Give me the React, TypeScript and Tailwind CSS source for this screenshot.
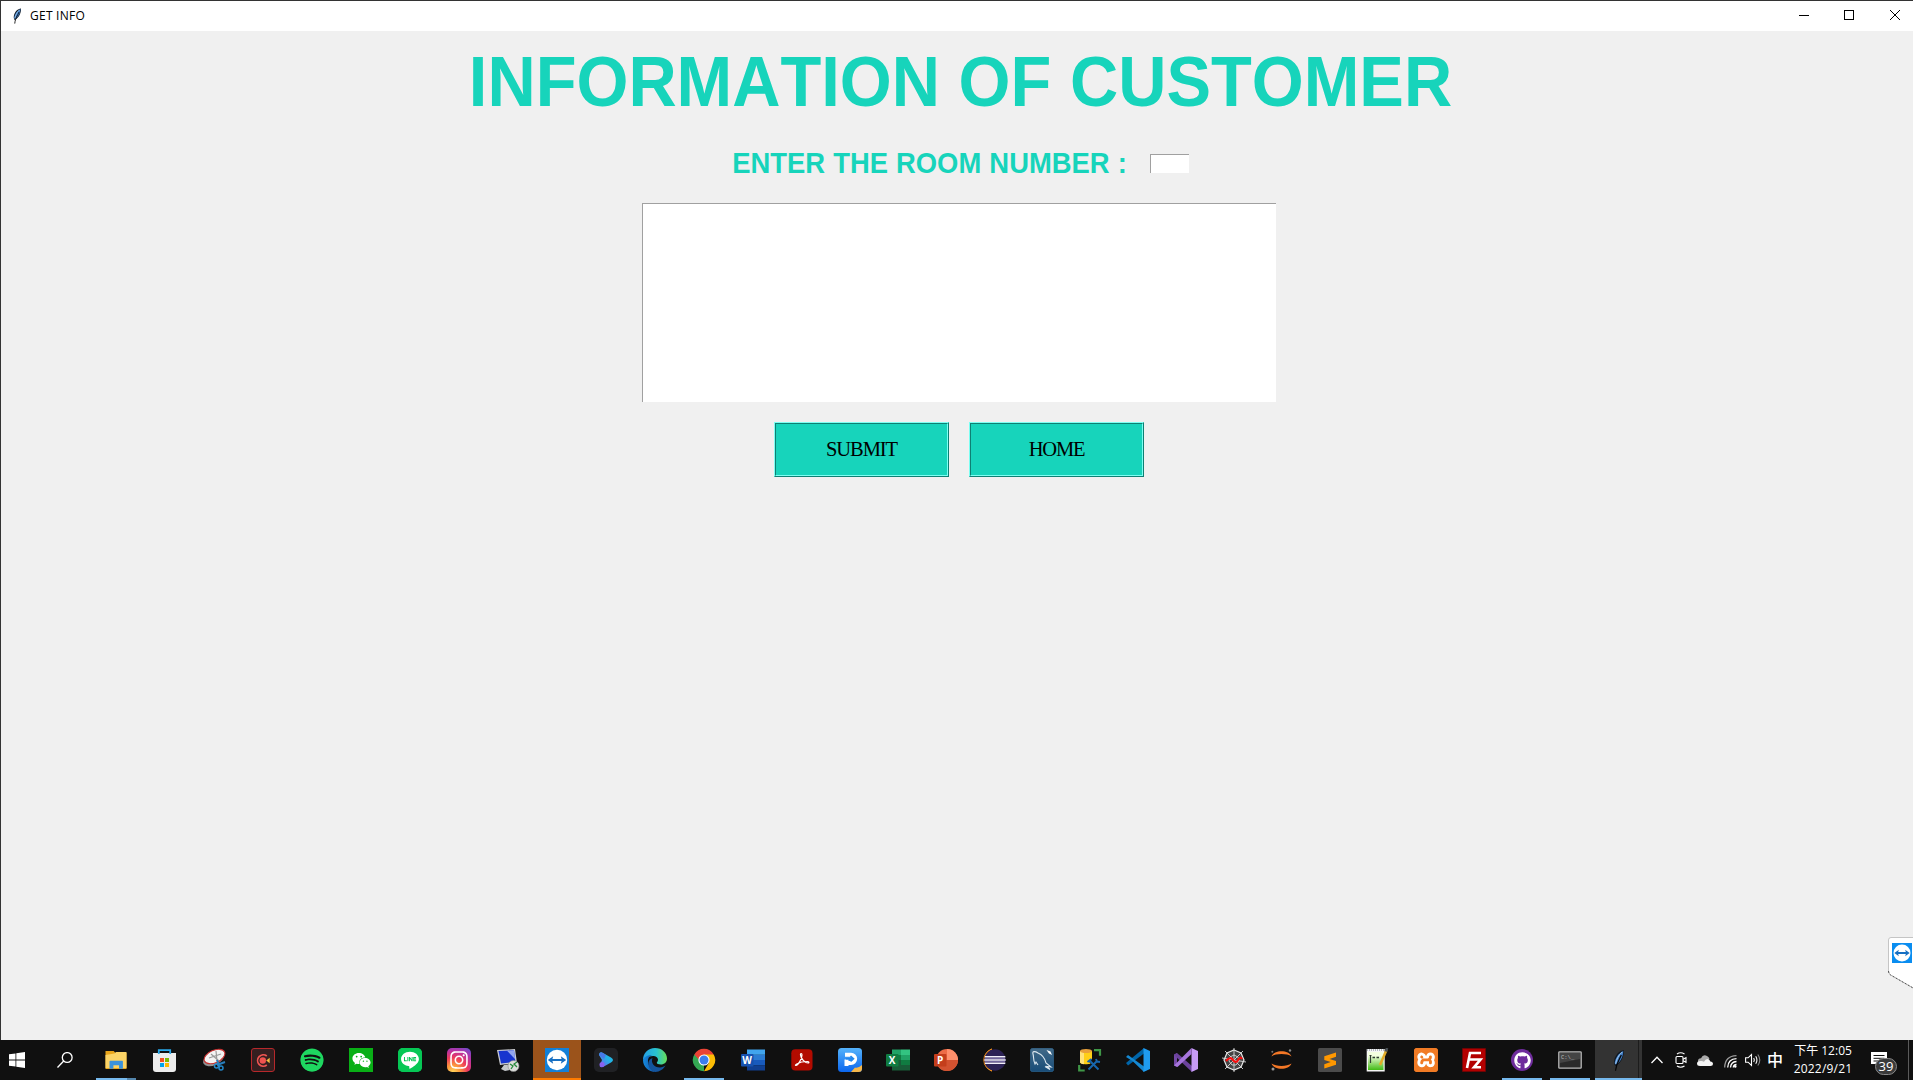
import React from "react";
import { FaSpotify, FaWeixin, FaLine, FaGithub, FaInstagram } from "react-icons/fa";
import { SiXampp } from "react-icons/si";

type P = { children: React.ReactNode };
const Ico = ({ children }: P) => (
  <svg viewBox="0 0 24 24" className="block size-6 shrink-0">{children}</svg>
);

const Feather = ({ className }: { className: string }) => (
  <svg viewBox="0 0 12 20" className={className}>
    <path d="M11 .6C7 .9 3.400 4.500 2.200 9 1.600 11.500 2 13.500 3 15c3-1.500 5.500-4 6.800-7.500C10.700 5 11.200 2.500 11 .6z" fill="#111820" />
    <path d="M10.400 1.200C6.500 3 2.900 7.500 2.500 12.500l1 1.500C7.500 11.500 10.200 7 10.400 1.200z" fill="#3f7fca" />
    <path d="M9.400 2.200C6 5 4 9 3.400 13" stroke="#b8d7f0" strokeWidth=".8" fill="none" />
    <path d="M8.600 5C6.500 10 4 12 3.200 19.500" stroke="#070707" strokeWidth="1.100" fill="none" />
  </svg>
);

const TeamViewer = ({ className, color }: { className: string; color: string }) => (
  <svg viewBox="0 0 24 24" className={className}>
    <rect width="24" height="24" fill={color} />
    <circle cx="12" cy="12" r="10.200" fill="#fff" />
    <path d="M2.800 12l5.400-3.800-.8 2.700h9.200l-.8-2.700 5.400 3.800-5.400 3.800.8-2.700H7.400l.8 2.700z" fill="#176fc2" />
  </svg>
);

const Letter = ({ c, dark }: { c: string; dark: string }) => (
  <>
    <rect x="0" y="6" width="12.500" height="12.500" rx="1" fill={dark} />
    <text x="6.200" y="15.900" textAnchor="middle" fontSize="10" fontWeight="700" fontFamily="Open Sans, sans-serif" fill="#fff">{c}</text>
  </>
);

const Explorer = () => (
  <Ico>
    <path d="M1.500 3h8.200l1.800 2H22.500v16H1.500z" fill="#e9a51a" />
    <path d="M1.500 7l9-1.500 1.500-1.500h10.500V20H1.500z" fill="#fbd366" />
    <path d="M5.500 20.800V13.500q0-.7.7-.7h12q.7 0 .7.700v7.300h-3.900v-3.500h-5.600v3.500z" fill="#3a92dc" />
  </Ico>
);
const Store = () => (
  <Ico>
    <path d="M0 5h23v16q0 3-3 3H3q-3 0-3-3z" fill="#ececec" />
    <path d="M5.800 6V2.200h11.400V6" stroke="#28a8ea" strokeWidth="1.800" fill="none" />
    <path d="M7 10h4v4H7z" fill="#f25022" /><path d="M12 10h4v4h-4z" fill="#7fba00" />
    <path d="M7 15h4v4H7z" fill="#00a4ef" /><path d="M12 15h4v4h-4z" fill="#ffb900" />
  </Ico>
);
const Snip = () => (
  <Ico>
    <ellipse cx="11.500" cy="11" rx="11" ry="6.200" transform="rotate(-24 11.500 11)" fill="#8f9294" />
    <ellipse cx="12.500" cy="8.500" rx="11" ry="6.200" transform="rotate(-24 12.500 8.500)" fill="#f3f3f3" stroke="#c63030" strokeWidth="1.100" />
    <path d="M7 10l12-4M14 3l1 10M9 6l8 7" stroke="#9a9a9a" strokeWidth="1.200" />
    <path d="M15 17l8-3M17.500 19L15 12" stroke="#287ebd" strokeWidth="2" />
    <circle cx="14.500" cy="18" r="2" fill="none" stroke="#2387c9" strokeWidth="1.500" />
    <circle cx="19" cy="20" r="2" fill="none" stroke="#2387c9" strokeWidth="1.500" />
  </Ico>
);
const Recorder = () => (
  <Ico>
    <rect x=".5" y=".5" width="23" height="23" rx="2.500" fill="#351f20" stroke="#b7282b" />
    <path d="M15.800 8a5.700 5.700 0 1 0 0 9" fill="none" stroke="#ef5552" strokeWidth="1.700" />
    <circle cx="11.800" cy="12.500" r="3.200" fill="#f05350" />
    <path d="M15.200 12.500l3.500-2.800v5.600z" fill="#f6bd3f" />
  </Ico>
);
const Spotify = () => (
  <div className="flex size-6 items-center justify-center"><FaSpotify size={24} className="rounded-full bg-[#101010] text-[#1ed760]" /></div>
);
const WeChat = () => (
  <div className="flex size-6 items-center justify-center bg-[#09af16]"><FaWeixin size={19} color="#fff" /></div>
);
const Line = () => (
  <div className="flex size-6 items-center justify-center overflow-hidden rounded-[5px] bg-[#06c755]">
    <div className="flex size-[22px] items-center justify-center rounded-[6px] bg-white"><FaLine size={28} className="shrink-0 text-[#06c755]" /></div>
  </div>
);
const Insta = () => (
  <div className="flex size-6 items-center justify-center rounded-[5px] bg-[radial-gradient(circle_at_25%_100%,#ffd65c_0%,#fc9c3c_22%,#ee3a5b_48%,#b833a5_72%,#5853d8_100%)]">
    <FaInstagram size={20} color="#fff" />
  </div>
);
const Remote = () => (
  <Ico>
    <path d="M8 17l7-1 3 5-9 2-4-2z" fill="#c4c7ca" />
    <path d="M1 2l18-1 2 14-17 2z" fill="#c9cbd0" />
    <path d="M2.500 3l15.500-.7 1.400 11.700L5 15.500z" fill="#1735cf" />
    <path d="M11 2.700l7-.4 1.200 9z" fill="#91a6f0" />
    <circle cx="17.500" cy="18" r="5.500" fill="#dcdedb" stroke="#888" strokeWidth=".6" />
    <path d="M14 16l3 2-2 3M21 14l-3 2 3 3" fill="none" stroke="#278a3b" strokeWidth="1.300" />
  </Ico>
);
const Player = () => (
  <Ico>
    <defs><linearGradient id="pl" x1="0" x2="1" y1="1" y2="0"><stop stopColor="#7d55f2" /><stop offset=".6" stopColor="#20b4e6" /><stop offset="1" stopColor="#25b5dc" /></linearGradient></defs>
    <rect width="24" height="24" rx="5" fill="#202124" />
    <path d="M5 7q0-4 4-2l8 4.500q4 2.500 0 5L9 19q-4 1-3-2l2-5z" fill="url(#pl)" />
    <circle cx="8" cy="16.500" r="2.500" fill="#8861ef" /><path d="M5 7q1-4 4-2l3 2-2 4z" fill="#4878e8" />
  </Ico>
);
const Edge = () => (
  <Ico>
    <defs>
      <linearGradient id="e1" x1="0" x2="1"><stop stopColor="#249ee4" /><stop offset=".55" stopColor="#28c2d0" /><stop offset="1" stopColor="#67df56" /></linearGradient>
      <linearGradient id="e2" x1="0" x2="1"><stop stopColor="#168be0" /><stop offset="1" stopColor="#104f9f" /></linearGradient>
    </defs>
    <path d="M0 12C0 5 5 0 12 0s12 5 12 10.500c0 3.800-2.700 6-6.200 6-2.500 0-4-.8-4-1.700 0-.7 1.200-1.300 1.200-3C15 9.300 12.500 8 10 8 5 8 .2 11 0 12z" fill="url(#e1)" />
    <path d="M0 12c.5-3 5-5.300 9.500-4.700-4.700 1-5.200 5.400-3.900 9C7 20.300 11 24 12.500 24 5.500 24 0 18.800 0 12z" fill="url(#e2)" />
    <path d="M9.500 10c-2 4.500 1.500 9.500 7.500 9.500 2.300 0 4-.8 5.600-1.900C20.500 21.300 16.500 24 12.500 24 7.500 23 4.500 18 5.500 14c.5-2 2-3.300 4-4z" fill="#14549c" />
  </Ico>
);
const Chrome = () => (
  <Ico>
    <path d="M12 12L2.300 6.400A11.200 11.200 0 0 1 21.700 6.400z" fill="#ea4335" />
    <path d="M12 12L2.300 6.400A11.200 11.200 0 0 0 12 23.200z" fill="#34a853" />
    <path d="M2.300 6.400l4.900 8.400L12 12z" fill="#34a853" />
    <path d="M21.700 6.400A11.200 11.200 0 0 1 12 23.200l4.900-8.400L12 6.400z" fill="#fbbc05" />
    <path d="M2.300 6.400h19.400H12L7.200 12z" fill="#ea4335" />
    <circle cx="12" cy="12" r="5.600" fill="#fff" /><circle cx="12" cy="12" r="4.500" fill="#3b7ded" />
  </Ico>
);
const Word = () => (
  <Ico>
    <path d="M6 1.500h18v5.300H6z" fill="#41a5ee" /><path d="M6 6.800h18V12H6z" fill="#2b7cd3" />
    <path d="M6 12h18v5.200H6z" fill="#185abd" /><path d="M6 17.200h18v5.300H6z" fill="#103f91" />
    <Letter c="W" dark="#1752b0" />
  </Ico>
);
const Excel = () => (
  <Ico>
    <path d="M6 1.500h9v6H6z" fill="#21a366" /><path d="M15 1.500h9v6h-9z" fill="#33c481" />
    <path d="M6 7h9v5H6z" fill="#107c41" /><path d="M15 7h9v5h-9z" fill="#21a366" />
    <path d="M6 12h9v5H6z" fill="#185c37" /><path d="M15 12h9v5h-9z" fill="#107c41" />
    <path d="M6 17h18v5.500H6z" fill="#185c37" />
    <Letter c="X" dark="#107c41" />
  </Ico>
);
const Ppt = () => (
  <Ico>
    <circle cx="13" cy="12" r="11" fill="#ed6c47" /><path d="M13 1a11 11 0 0 1 11 11H13z" fill="#ff8f6b" />
    <path d="M24 12a11 11 0 0 1-22 0z" fill="#d35230" />
    <Letter c="P" dark="#c43e1c" />
  </Ico>
);
const Acrobat = () => (
  <Ico>
    <rect x="1.300" y="1.300" width="21.200" height="21.200" rx="4" fill="#b30b00" />
    <path d="M6 17.500c2-.2 6-6.500 6-10.500 0-2-1.700-2-1.500 0 .3 3.500 4.500 8 7.500 8 1.500 0 1-1.500-.5-1.500-3 0-8 .8-10.800 2.400-1.300.8-1.700 1.700-.7 1.600z" fill="none" stroke="#fff" strokeWidth="1.200" />
  </Ico>
);
const PdfTool = () => (
  <Ico>
    <defs><linearGradient id="pd" x2="0" y2="1"><stop stopColor="#55b3fb" /><stop offset="1" stopColor="#0b66ee" /></linearGradient></defs>
    <rect width="24" height="24" rx="3.500" fill="url(#pd)" />
    <path d="M8.500 18v-6.500M7 6.700h6a3.900 3.900 0 0 1 0 8.300H9" fill="none" stroke="#fff" strokeWidth="4" />
    <path d="M8 10.700h7m-2.500-2.700l3 2.700-3 2.700" fill="none" stroke="#2388ed" strokeWidth="1.600" />
    <path d="M24 17v3.500q0 3.500-3.500 3.500H13l4-4.500q3 1 7-2.500z" fill="#f7b84b" />
  </Ico>
);
const Eclipse = () => (
  <Ico>
    <path d="M10 1A11.500 11.500 0 0 0 10 23 12 12 0 0 1 10 1z" fill="#f7941e" stroke="#f7941e" />
    <circle cx="13" cy="12" r="10.700" fill="#2c2255" />
    <path d="M3 8.700h20.300M2.300 12h21.400M3 15.300h20.300" stroke="#f2effa" strokeWidth="1.400" />
    <path d="M3 10.300h20M3 13.700h20" stroke="#8377ae" strokeWidth="1" />
  </Ico>
);
const MySql = () => (
  <Ico>
    <defs><linearGradient id="my" x2="0" y2="1"><stop stopColor="#426a88" /><stop offset="1" stopColor="#174c78" /></linearGradient></defs>
    <rect x=".3" y=".3" width="23.400" height="23.400" rx="2.500" fill="url(#my)" stroke="#326b97" strokeWidth=".6" />
    <path d="M8 17L6 14l-1 2C3 12 4 9 3 6 2 3 5 3 8 5c5 2 7 6 8 10l5 4-4-.5 3 3-5-3" fill="none" stroke="#dbe7ef" strokeWidth="1.100" />
    <path d="M16.500 2l4 1.500L22 7l-3-1.500z" fill="#fff" />
  </Ico>
);
const DbTool = () => (
  <Ico>
    <path d="M16 2.200h6v5.500M1.200 17v5.500h5.500" fill="none" stroke="#3f9747" strokeWidth="2.200" />
    <path d="M2 3v11c0 3 12 3 12 0V3z" fill="#ffcf17" /><path d="M2 3v11c0 1 1.500 2 4 2.200V3z" fill="#ffe27a" />
    <ellipse cx="8" cy="3" rx="6" ry="2" fill="#e9a13b" />
    <path d="M10 22l10-10M12 12l9 10" stroke="#101010" strokeWidth="4" />
    <path d="M10.500 21.500l9-9M12 13l8.500 8.500M9.500 14l4-3M18 11l1 2.500 3 .5" fill="none" stroke="#1766ae" strokeWidth="2" />
  </Ico>
);
const VsCode = () => (
  <Ico>
    <path d="M18 0L0 15l2 2.500 16-12z" fill="#0065a9" />
    <path d="M0 9l2-2 16 11.500V24L6.500 13z" fill="#1588d1" />
    <path d="M17.500 0L24 3v18l-6.500 3z" fill="#1f9cf0" />
  </Ico>
);
const VisualStudio = () => (
  <Ico>
    <path d="M0 6.500L3 5v14l-3-1.500z" fill="#7549a8" />
    <path d="M3 5l15 13v6L0 7z" fill="#6b429c" />
    <path d="M17.500 0L24 3v18l-6.500 3z" fill="#c79af5" />
    <path d="M3.500 19L17.500 6V0L0 17.500z" fill="#a675dc" />
  </Ico>
);
const Spyder = () => (
  <Ico>
    <path d="M12 2l7 3 3 7-3 7-7 3-7-3-3-7 3-7z" fill="#444" stroke="#e6e6e6" strokeWidth="1.200" />
    <path d="M12 0v24M0 10l24 4M3 3l18 18M21 3L3 21M12 7l4 2 1 4-3 4h-4l-3-4 1-4z" fill="none" stroke="#d8d8d8" strokeWidth=".9" />
    <path d="M4 13q4-5 7-1t5 0 4-1" fill="none" stroke="#fb0d0d" strokeWidth="2.200" />
  </Ico>
);
const Jupyter = () => (
  <Ico>
    <path d="M1.500 8.500C4 1.500 19 1.500 21.500 8.500 17 5.300 6 5.300 1.500 8.500z" fill="#f37726" />
    <path d="M1.500 15.500C4 22.500 19 22.500 21.500 15.500 17 18.700 6 18.700 1.500 15.500z" fill="#f37726" />
    <circle cx="2.300" cy="3.800" r="1" fill="#777" /><circle cx="3" cy="21" r="1.500" fill="#999" /><circle cx="20" cy="2.500" r="1.200" fill="#888" />
  </Ico>
);
const Sublime = () => (
  <Ico>
    <rect width="24" height="24" rx="1.500" fill="#4b4b4b" />
    <path d="M6.300 8.300L18 4.500v4.300l-6.500 2.200 6.500 2v3.700L6.300 20.500v-4.300l6.400-2.100-6.400-2z" fill="#ff9800" />
  </Ico>
);
const Notepad = () => (
  <Ico>
    <defs><linearGradient id="np" x2="0" y2="1"><stop offset=".2" stopColor="#f4ffdf" /><stop offset="1" stopColor="#41bb15" /></linearGradient></defs>
    <path d="M.7 1h18v22.500H.7z" fill="#f5f5f5" /><path d="M2 4h15.500v18H2z" fill="url(#np)" />
    <path d="M1 2h18" stroke="#9da5ad" strokeWidth="1.500" strokeDasharray="1 1" />
    <path d="M4.500 7v8M3.500 7.500h2" stroke="#303b31" strokeWidth="1.200" />
    <path d="M6.500 9.500h2.500M10.500 9.500H13" stroke="#303b31" strokeWidth="1.600" />
    <path d="M14 17L20.500 2" stroke="#e2ac28" strokeWidth="2.500" /><path d="M19.700 3.500L21.200 0" stroke="#4b5258" strokeWidth="2.500" />
  </Ico>
);
const Xampp = () => (
  <div className="flex size-6 items-center justify-center overflow-hidden rounded-[3px] bg-[#f17b25]">
    <div className="flex size-[22px] items-center justify-center bg-white"><SiXampp size={24} className="shrink-0 text-[#f17b25]" /></div>
  </div>
);
const FileZilla = () => (
  <Ico>
    <rect x=".5" y=".5" width="23" height="23" fill="#b30000" stroke="#7f0000" strokeDasharray="1 1" />
    <path d="M5 20L8 5H19M7 11.500h7M11 11.500h7.500L12 19.300h7" fill="none" stroke="#fff" strokeWidth="2.600" />
  </Ico>
);
const GitHub = () => (
  <div className="flex size-6 items-center justify-center">
    <div className="flex size-[22px] items-center justify-center rounded-full bg-[#6e2c9c]"><FaGithub size={17} color="#fff" /></div>
  </div>
);
const Cmd = () => (
  <Ico>
    <rect x=".8" y="3.800" width="22.400" height="16.400" rx=".8" fill="#2a2a2a" stroke="#b9b9b9" strokeWidth="1.300" />
    <path d="M2 5h20v6L2 15z" fill="#444" />
    <text x="3" y="11" fontSize="5.500" fontFamily="Liberation Mono, monospace" fill="#bbb">C:\_</text>
  </Ico>
);

type Item = { icon: React.FC; mark?: string };
const leftApps: Item[] = [
  { icon: Explorer, mark: "split" }, { icon: Store }, { icon: Snip }, { icon: Recorder }, { icon: Spotify },
  { icon: WeChat }, { icon: Line }, { icon: Insta }, { icon: Remote },
  { icon: () => <TeamViewer className="block size-6" color="#1380d8" />, mark: "alert" },
  { icon: Player }, { icon: Edge }, { icon: Chrome, mark: "run" }, { icon: Word },
];
const rightApps: Item[] = [
  { icon: Acrobat }, { icon: PdfTool }, { icon: Excel }, { icon: Ppt }, { icon: Eclipse }, { icon: MySql },
  { icon: DbTool }, { icon: VsCode }, { icon: VisualStudio }, { icon: Spyder }, { icon: Jupyter }, { icon: Sublime },
  { icon: Notepad }, { icon: Xampp }, { icon: FileZilla }, { icon: GitHub, mark: "run" }, { icon: Cmd, mark: "run" },
];

const AppCell = ({ item }: { item: Item }) => {
  const I = item.icon;
  return (
    <div className={item.mark === "alert" ? "flex h-10 w-12 flex-col justify-between bg-[#9b531b] pt-2" : "flex h-10 w-12 flex-col justify-between pt-2"}>
      <div className="pl-3"><I /></div>
      {item.mark === "run" && <div className="mx-1 h-0.5 bg-[#76b9ed]" />}
      {item.mark === "alert" && <div className="h-0.5 bg-[#ff7b00]" />}
      {item.mark === "split" && (
        <div className="mx-1 flex h-0.5"><div className="w-[31px] bg-[#76b9ed]" /><div className="flex-1 bg-[#5486ad]" /></div>
      )}
    </div>
  );
};

const TkButton = ({ label, spacing }: { label: string; spacing: string }) => (
  <button className="h-[55px] w-[175px] border border-t-[#7dfff3] border-r-[#0e8073] border-b-[#0e8073] border-l-[#7dfff3] bg-[#17d4bb] font-['Liberation_Serif',serif] text-[20.500px] leading-none text-black">
    <span className={"flex size-full items-center justify-center border border-t-[#0e8073] border-r-[#7dfff3] border-b-[#7dfff3] border-l-[#0e8073] " + spacing}>{label}</span>
  </button>
);

export default function App() {
  return (
    <div className="relative flex h-[1080px] w-[1913px] flex-col overflow-hidden bg-[#f0f0f0] text-black">
      <div className="flex h-[1040px] flex-col border-t border-l border-[#333]">
        <header className="flex h-[30px] shrink-0 items-center bg-white pl-[11px]">
          <Feather className="h-4 w-[10px]" />
          <span className="ml-2 flex-1 font-['Open_Sans',sans-serif] text-[12px] leading-[30px] tracking-[0.250px]">GET INFO</span>
          <svg viewBox="0 0 160 30" className="h-[30px] w-40" fill="none" stroke="#000" shapeRendering="crispEdges">
            <path d="M46 14.500h10" /><path d="M91.500 9.500h9v9h-9z" /><path d="M137 9l10 10M147 9l-10 10" shapeRendering="auto" />
          </svg>
        </header>
        <main className="flex flex-col items-center pl-1">
          <h1 className="mt-[14px] h-[77px] origin-[50%_62px] scale-y-[1.04] pl-[3px] font-['Liberation_Sans',sans-serif] text-[66.800px] leading-[77px] font-bold whitespace-nowrap text-[#17d4bb] [font-kerning:none]">INFORMATION OF CUSTOMER</h1>
          <div className="mt-[25px] flex h-[33px] items-center pl-[3px]">
            <span className="origin-[50%_26px] scale-y-[1.05] font-['Liberation_Sans',sans-serif] text-[27.400px] leading-[33px] font-bold whitespace-nowrap text-[#17d4bb] [word-spacing:0.500px] [font-kerning:none]">ENTER THE ROOM NUMBER :</span>
            <input aria-label="room" className="ml-[23px] h-[19px] w-[39px] border-t border-l border-[#a0a0a0] bg-white outline-none" />
          </div>
          <div className="mt-[23px] h-[199px] w-[634px] border-t border-l border-[#a0a0a0] bg-white" />
          <div className="mt-5 flex gap-5">
            <TkButton label="SUBMIT" spacing="tracking-[-1.100px]" />
            <TkButton label="HOME" spacing="tracking-[-1.200px]" />
          </div>
        </main>
      </div>

      <div className="absolute top-[937px] right-0 h-[53px] w-[25px]">
        <svg viewBox="0 0 25 53" className="absolute inset-0 size-full">
          <path d="M26 .5H3Q.5.5.5 3v31q0 3 3 4.500L26 51.500z" fill="#fff" stroke="#c5c5c5" />
          <path d="M.5 34q0 3 3 4.500L26 51.500" fill="none" stroke="#555" strokeDasharray="2 1.500" />
        </svg>
        <TeamViewer className="absolute top-1.5 left-1 size-5" color="#0a8df0" />
      </div>

      <footer className="flex h-10 w-full bg-[#101010] text-white">
        <div className="flex w-[92px] items-center">
          <svg viewBox="0 0 16 16" className="ml-[9px] size-4" fill="#fff"><path d="M0 2.300L6.500 1.400v6.200H0zM7.300 1.300L16 0v7.600H7.300zM0 8.400h6.500v6.200L0 13.700zM7.300 8.400H16V16l-8.700-1.300z" /></svg>
          <svg viewBox="0 0 16 16" className="ml-8 size-4" fill="none" stroke="#fff" strokeWidth="1.300"><circle cx="10.200" cy="5.500" r="4.900" /><path d="M6.700 9L.5 15.500" /></svg>
        </div>
        <div className="flex gap-px pr-px">{leftApps.map((a, i) => <AppCell key={i} item={a} />)}</div>
        <div className="flex">{rightApps.map((a, i) => <AppCell key={i} item={a} />)}</div>
        <div className="ml-px flex h-10 w-[47px] flex-col border-b-2 border-[#76b9ed] bg-[#333]">
          <div className="flex h-[38px]">
            <div className="flex w-[43px] items-center justify-center"><Feather className="mt-0.5 ml-1 h-[23px] w-[13px]" /></div>
            <div className="w-px bg-[#1c1c1c]" />
          </div>
        </div>
        <div className="flex flex-1 items-center">
          <svg viewBox="0 0 12 8" className="ml-[9px] h-2 w-3" fill="none" stroke="#fff" strokeWidth="1.300"><path d="M.5 7L6 1.300 11.500 7" /></svg>
          <svg viewBox="0 0 12 16" className="ml-3 h-4 w-3" fill="none" stroke="#fff" strokeWidth="1.100"><rect x="1" y="4.500" width="7" height="7" rx="1" /><path d="M8 7.300l3-1.600v4.600L8 8.700M2 2q3.500-2.500 7.500 0M2 14q3.500 2.500 7.500 0" /></svg>
          <svg viewBox="0 0 16 11" className="ml-2.5 h-[11px] w-4"><path d="M1 7Q.5 3.500 4 3.200 6-1 10 1q2 1 2.500 3L6 9z" fill="#aaa" /><path d="M3 11q-3 0-3-2.500T3.500 6q2-.3 3.500.8Q9 3 12 4.500q1 .8 1.300 2Q16 6.500 16 9q0 2-2.500 2z" fill="#f4f4f4" /></svg>
          <svg viewBox="0 0 13 13" className="mt-0.5 ml-[11px] size-[13px]" fill="none" strokeWidth="1.300"><path d="M.7 12.500Q1 1 12.500.7" stroke="#999" /><path d="M3.700 12.500Q4 4 12.500 3.700M6.500 12.500q.3-5.500 6-6M9.300 12.500q.2-2.800 3.200-3" stroke="#fff" /><circle cx="11.300" cy="11.500" r="1.200" fill="#fff" /></svg>
          <svg viewBox="0 0 16 14" className="ml-2 h-3.5 w-4" fill="none" stroke="#fff" strokeWidth="1.100"><path d="M.6 4.800h2.500L6.500 1.500v11L3.100 9.200H.6zM8.700 5q1.300 2 0 4M10.700 3.200q2.500 3.800 0 7.600" /><path d="M12.800 1.500q4 5.500 0 11" stroke="#888" /></svg>
          <span className="mb-0.5 ml-[6px] w-4 font-['Noto_Sans_CJK_TC',sans-serif] text-[16px] leading-4 font-medium">中</span>
          <div className="ml-[7px] flex w-[66px] flex-col items-center font-['Open_Sans','Noto_Sans_CJK_TC',sans-serif] text-[12px] leading-[18px] whitespace-nowrap">
            <span>下午 12:05</span><span className="tracking-[0.200px]">2022/9/21</span>
          </div>
          <div className="relative ml-[15px] h-10 w-[30px]">
            <svg viewBox="0 0 16 16" className="absolute top-3 left-0 size-4"><path d="M0 0h16v12H8l-3 3.500V12H0z" fill="#fff" /><path d="M2.500 3.500h11M2.500 6.300h11M2.500 9h7" stroke="#101010" /></svg>
            <span className="absolute top-[18px] left-1 flex h-[17px] w-[22px] items-center justify-center rounded-full border border-[#888] bg-[#3a3a3a] font-['Open_Sans',sans-serif] text-[13px] leading-none">39</span>
          </div>
          <div className="ml-auto h-10 w-[5px] border-l border-[#5a5a5a]" />
        </div>
      </footer>
    </div>
  );
}
